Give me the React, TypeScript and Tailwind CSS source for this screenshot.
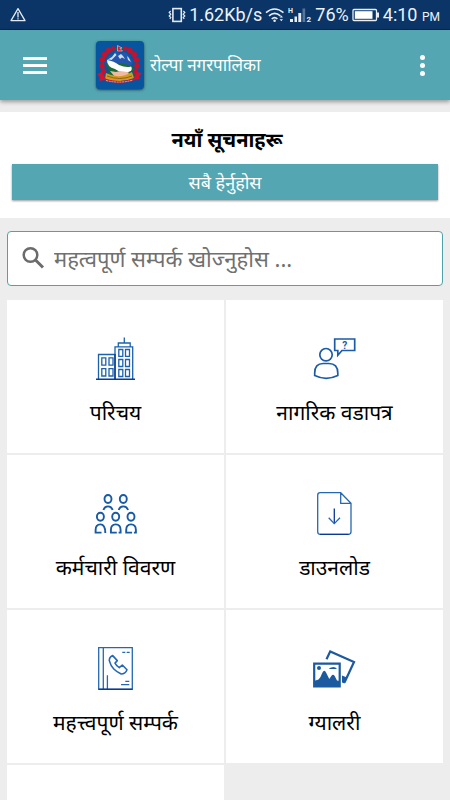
import { useState } from "react";
import type { ReactNode } from "react";

interface Tile {
  label: string;
  href: string;
  icon: ReactNode;
}

const Warning = () => (
  <svg className="h-4 w-4" viewBox="0 0 16 16" fill="none" stroke="#e4eaf3" strokeWidth="1.3">
    <path d="M8 1.6 15 13.6H1Z" strokeLinejoin="round" />
    <path d="M8 5v5.4M8 11.3v1.2" />
  </svg>
);

const Vibrate = () => (
  <svg className="h-4 w-[18px]" viewBox="0 0 18 16" fill="none" stroke="#e4eaf3" strokeWidth="1.2">
    <rect x="4.9" y="1.6" width="8.4" height="12.8" strokeWidth="1.6" />
    <path d="M2.6 4 1.2 5.5 2.8 7.2 1.2 9 2.8 10.6 1.8 12M15.4 4l1.4 1.5-1.6 1.7 1.6 1.8-1.6 1.6 1 1.4" />
  </svg>
);

const Wifi = () => (
  <svg className="h-4 w-5" viewBox="0 0 20 16" fill="none" stroke="#e9eef5" strokeWidth="1.6">
    <path d="M1 5.6Q9.500-1.600 18.500 5.600M4 8.900Q9.700 4 15.400 8.900M6.700 12Q9.700 9.400 12.400 12" />
    <circle cx="9.600" cy="13.800" r="1.300" fill="#e9eef5" stroke="none" />
    <path d="m14.600 10.400 1.700-1.900 1.700 1.900ZM14.600 12.300l1.700 1.900 1.700-1.900Z" fill="#e9eef5" stroke="none" />
  </svg>
);

const Signal = () => (
  <svg className="h-4 w-6" viewBox="0 0 24 16" fill="#e9eef5" fontFamily="Roboto, sans-serif">
    <text x="0" y="6" fontSize="7" fontWeight="700">
      H
    </text>
    <path d="M2 12h3v3H2zM6.500 9.500h2.500V15H6.500zM10.300 6h2.900v9h-2.900z" />
    <path d="M14.500 1.500h2.700V15h-2.700z" opacity=".35" />
    <text x="18.500" y="15" fontSize="8" fontWeight="700">
      2
    </text>
  </svg>
);

const Battery = () => (
  <svg className="h-4 w-7" viewBox="0 0 28 16" fill="none" stroke="#e9eef5">
    <rect x="1" y="2.500" width="23.500" height="11" rx="1" strokeWidth="1.300" />
    <path d="M2.800 4.200h17.700v7.600H2.800z" fill="#fff" stroke="none" />
    <path d="M26 5.500v5" strokeWidth="2" />
  </svg>
);

const Emblem = () => (
  <svg className="h-12 w-12 rounded-sm bg-[#08559f] shadow-sm shadow-black/50" viewBox="0 0 48 48">
    {/* rhododendron wreath */}
    <circle cx="24" cy="24" r="17" fill="none" stroke="#1b6b3a" strokeWidth="1.500" strokeDasharray="75 35" transform="rotate(147 24 24)" />
    <g fill="#c8102e">
      <circle cx="17" cy="7.500" r="2.200" />
      <circle cx="12.500" cy="9.500" r="2.700" />
      <circle cx="8.500" cy="13.500" r="2.800" />
      <circle cx="6.300" cy="19" r="2.800" />
      <circle cx="6" cy="25" r="2.700" />
      <circle cx="7.800" cy="30" r="2.500" />
      <circle cx="29" cy="7.500" r="2.200" />
      <circle cx="34" cy="9.500" r="2.700" />
      <circle cx="38.300" cy="13.500" r="2.800" />
      <circle cx="40.500" cy="19" r="2.800" />
      <circle cx="41" cy="25" r="2.700" />
      <circle cx="39.500" cy="30" r="2.500" />
    </g>
    <path d="M9 22 13 15l4-1 3-4 4 3 5-2 4 4 4 7-4 4-12-3Z" fill="#2456ad" />
    <path d="m11 19 5-3 3-4 1.500 2-3 3-2 2-2-.5ZM22 15l3-2 2 2 2 3-3-1.500-2 1.500ZM31 15l2 2 2 4-3-2Z" fill="#cfe0f4" />
    <path d="M10 23Q20 20 36 25L38 29Q27 36 14 31Z" fill="#1c6b35" />
    <path d="M11 19Q18 20 23 24 30 27 35 25.500 37 28 34 31 26 33 19 28 11 26 11 19Z" fill="#fdfdfd" />
    <path d="M12 31q5 0 7 3l3 3h-9ZM35 30q-4 1-6 3l-4 4h10Z" fill="#1c6b35" />
    <path d="m14 30 6 1 4-1 7 1q3 0 1 3l-7 2h-6Z" fill="#f0b9a0" />
    <path d="M10 32q13 7 26-1l2 6q-14 6-29 1Z" fill="#d39b22" />
    <path d="M11 35q13 5 25 0" fill="none" stroke="#94600f" strokeWidth="1" />
    <path d="m1 33 5-2 4 7Q24 42 37 38l4-7 5 1-3 3 1 3-5 1Q24 45 8 39l-5 1 1-3Z" fill="#d31330" />
    <path d="M10 39.500q14 3.500 27-.5" fill="none" stroke="#f3b6bd" strokeWidth=".8" strokeDasharray="2 .7" />
    <path d="m21.500 4.500 4.500 2.500-2 .5 2.500 2.500h-5Z" fill="#dc143c" stroke="#f4f6fb" strokeWidth=".5" />
  </svg>
);

const BuildingIcon = () => (
  <svg className="h-11 w-11" viewBox="0 0 44 44" fill="none" stroke="#1c62ab" strokeWidth="1.300">
    <path d="M4.500 43V18.500H21M21 43V10.800h17.700V43M24.300 10.800V7h11.900v3.800M30.300 7V1.500" />
    <path d="M7.800 21.800h4v7.400h-4zM15 21.800h4v7.400h-4zM7.800 32.700h4V40h-4zM15 32.700h4V40h-4zM24.800 13.500h4v6.900h-4zM31.500 13.500h4v6.900h-4zM24.800 23.500h4v7h-4zM31.500 23.500h4v7h-4zM24.800 33.500h4v7h-4zM31.500 33.500h4v7h-4z" />
    <path d="M2 43.300h39M21 18v25" stroke="#0c3c8c" strokeWidth="1.500" />
  </svg>
);

const AskIcon = () => (
  <svg className="h-11 w-11" viewBox="1 0 44 44" fill="none" stroke="#1c5ba6" strokeWidth="1.700">
    <circle cx="14" cy="18.700" r="6.200" />
    <path d="M2.700 39.500V37q0-9.500 8.500-9.500h5.600q9 0 9 9.500v2.500Q20 42.300 14.200 42.300T2.700 39.500Z" />
    <path d="M22.700 3h20v11.500H30l-4.200 4.800v-4.800h-3.100Z" />
    <text x="32.700" y="12.600" textAnchor="middle" fill="#1c5ba6" stroke="none" fontSize="10" fontWeight="700" fontFamily="Roboto, sans-serif">
      ?
    </text>
  </svg>
);

const StaffIcon = () => (
  <svg className="h-11 w-11" viewBox="0 0 44 44" fill="none" stroke="#175aa6" strokeWidth="1.900">
    <ellipse cx="14" cy="8" rx="3.500" ry="4" />
    <ellipse cx="29.300" cy="8" rx="3.500" ry="4" />
    <path d="M9.500 19q1-3.600 4.500-3.600t4.600 3.600M24.700 19q1-3.600 4.600-3.600T34 19" />
    <ellipse cx="6.400" cy="25.700" rx="3.500" ry="4" />
    <ellipse cx="21.700" cy="25.700" rx="3.500" ry="4" />
    <ellipse cx="37" cy="25.700" rx="3.500" ry="4" />
    <path d="M7.500 41.600H1.600V39q0-5.600 4.800-5.600 4.900 0 4.900 8.600M22.800 41.600h-5.900V39q0-5.600 4.800-5.600 4.900 0 4.900 5.600v2.600h-2M38.100 41.600h-5.900V39q0-5.600 4.800-5.600 4.900 0 4.900 5.600v2.600h-2" />
  </svg>
);

const DownloadIcon = () => (
  <svg className="h-11 w-11" viewBox="1 0 44 44" fill="none" stroke="#2668b0" strokeWidth="1.300">
    <path d="M28.700 1.700H8.200q-2.500 0-2.500 2.500v36.600q0 2.500 2.500 2.500h28.300q2.500 0 2.500-2.500V12.300ZM28.700 1.700v10.600H39" />
    <path d="M8 43.300h28.500M22.300 17.500v15" stroke="#0b3a94" />
    <path d="m16.700 26.800 5.600 5.800 5.700-5.800" />
  </svg>
);

const PhonebookIcon = () => (
  <svg className="h-11 w-11" viewBox="0 0 44 44" fill="none" stroke="#2668b0" strokeWidth="1.300">
    <path d="M4.700 1.700h33.600v41.600H4.700zM9.300 1.700v41.600M13.400 29.300v14" />
    <path d="M28.300 6.300h3M32.700 6.300h3M31.300 35.300h4M27 38.700h8.300" />
    <path d="M18.700 9.600q-3.400 1.400-3.400 5 1.500 5.500 4.500 8.400 3 3 7.400 5 4.200 0 5.800-4.300L28.300 19l-3 2.600q-2.800-1.600-4.300-4.500l2.300-2.500Z" strokeWidth="1.600" strokeLinejoin="round" />
    <path d="M4.700 43.300h33.600" stroke="#0b3a94" strokeWidth="1.500" />
  </svg>
);

const GalleryIcon = () => (
  <svg className="h-11 w-11" viewBox="2 0 44 44" fill="none" stroke="#1c5a9f" strokeWidth="2.200">
    <path d="m15.500 13.200 3.700-7.700L43 16l-9.500 20.500" />
    <path d="M31 29.500l5 2-2.500 6-2.500-1Z" fill="#1c5a9f" stroke="none" />
    <path d="M3.200 17.700h25.500v22.700H3.200z" />
    <circle cx="8" cy="22" r="2" fill="#1c5a9f" stroke="none" />
    <path d="M18 23q.5-1.700 2.500-1.500 2-1 3.500 0 2 0 1.500 1.500Z" fill="#1c5a9f" stroke="none" />
    <path d="M3 40.500V35l4.500-1.500q2-1.500 3.500-6 2-5 4.300-.5l3 6 2-3q1.700-2.500 3.400 0l2.300 4.500 2.500.5v5.500Z" fill="#1c5a9f" stroke="none" />
  </svg>
);

const tiles: Tile[] = [
  { label: "परिचय", href: "#intro", icon: <BuildingIcon /> },
  { label: "नागरिक वडापत्र", href: "#charter", icon: <AskIcon /> },
  { label: "कर्मचारी विवरण", href: "#staff", icon: <StaffIcon /> },
  { label: "डाउनलोड", href: "#download", icon: <DownloadIcon /> },
  { label: "महत्त्वपूर्ण सम्पर्क", href: "#contacts", icon: <PhonebookIcon /> },
  { label: "ग्यालरी", href: "#gallery", icon: <GalleryIcon /> },
];

const StatusBar = () => (
  <div className="flex h-[30px] shrink-0 items-center border-b border-[#04204f] bg-[#0a3566] px-[10px] font-[Roboto,sans-serif] text-lg text-[#eef2f8]">
    <Warning />
    <div className="ml-auto flex items-center gap-[3px]">
      <Vibrate />
      <span>1.62Kb/s</span>
      <Wifi />
      <Signal />
      <span>76%</span>
      <Battery />
      <span>
        4:10 <span className="text-xs">PM</span>
      </span>
    </div>
  </div>
);

const App = () => {
  const [query, setQuery] = useState("");

  return (
    <div className="flex h-screen flex-col overflow-hidden bg-[#ededed] font-['Noto_Sans','Noto_Sans_Devanagari',sans-serif] text-black">
      <StatusBar />

      <header className="z-10 flex h-[70px] shrink-0 items-center bg-[#53a6b2] pr-4 pl-[23px] text-white shadow-[0_2px_4px_rgba(0,0,0,0.35)]">
        <button type="button" aria-label="मेनु" className="flex flex-col gap-1">
          <span className="h-[3px] w-6 bg-white" />
          <span className="h-[3px] w-6 bg-white" />
          <span className="h-[3px] w-6 bg-white" />
        </button>
        <div className="ml-[49px] flex items-center gap-1.5">
          <Emblem />
          <h1 className="text-[17px]">रोल्पा नगरपालिका</h1>
        </div>
        <button type="button" aria-label="थप" className="ml-auto flex w-6 flex-col items-center gap-[3px]">
          <span className="h-[5px] w-[5px] rounded-full bg-white" />
          <span className="h-[5px] w-[5px] rounded-full bg-white" />
          <span className="h-[5px] w-[5px] rounded-full bg-white" />
        </button>
      </header>

      <main className="flex-1 overflow-hidden pt-3">
        <section className="bg-white px-3 pt-3 pb-[18px]">
          <h2 className="pl-1 text-center text-xl leading-8 font-bold">नयाँ सूचनाहरू</h2>
          <button
            type="button"
            className="mt-2 h-9 w-full bg-[#53a6b2] text-lg text-white shadow-[0_1px_2px_rgba(0,0,0,0.4)]"
          >
            सबै हेर्नुहोस
          </button>
        </section>

        <label className="mx-[7px] mt-[13px] flex h-[55px] items-center gap-[7px] rounded-sm border border-[#4fa3a8] bg-white pl-[14px]">
          <svg className="h-[25px] w-[25px]" viewBox="0 0 25 25" fill="none" stroke="#6b6b6b" strokeWidth="2.500">
            <circle cx="8.500" cy="9" r="6.800" />
            <path d="m13.500 14 7.500 7.500" strokeWidth="3" />
          </svg>
          <input
            type="text"
            aria-label="सम्पर्क खोज्नुहोस"
            placeholder="महत्वपूर्ण सम्पर्क खोज्नुहोस ..."
            value={query}
            onChange={(e) => setQuery(e.target.value)}
            className="h-full min-w-0 flex-1 pb-0.5 text-[22px] outline-none placeholder:text-[#707070]"
          />
        </label>

        <nav className="mx-[7px] mt-[14px] grid grid-cols-2 gap-[2px]">
          {tiles.map((tile) => (
            <a key={tile.href} href={tile.href} className="flex h-[153px] flex-col items-center bg-white pt-9">
              {tile.icon}
              <span className="mt-4 text-[21px] leading-8">{tile.label}</span>
            </a>
          ))}
          <div className="h-[153px] bg-white" />
        </nav>
      </main>
    </div>
  );
};

export default App;
